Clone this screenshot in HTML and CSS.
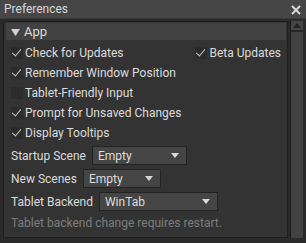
FILE: index.html
```html
<!DOCTYPE html>
<html>
<head>
<meta charset="utf-8">
<link rel="stylesheet" href="styles.css">
</head>
<body>
<div class="window">
  <div class="titlebar">
    <span class="title">Preferences</span>
    <svg class="close" width="10" height="10" viewBox="0 0 10 10"><path d="M1 1L9 9M9 1L1 9" stroke="#d8d8d8" stroke-width="2"/></svg>
  </div>
  <div class="body">
    <div class="panel">
      <div class="section">
        <div class="header"><svg class="tri" width="9" height="7" viewBox="0 0 9 7"><path d="M0 0H9L4.5 7Z" fill="#d0d0d0"/></svg><span>App</span></div>
        <div class="content">
          <div class="row split">
            <label class="check"><span class="box on"></span>Check for Updates</label>
            <label class="check"><span class="box on"></span>Beta Updates</label>
          </div>
          <div class="row"><label class="check"><span class="box on"></span>Remember Window Position</label></div>
          <div class="row"><label class="check"><span class="box"></span>Tablet-Friendly Input</label></div>
          <div class="row"><label class="check"><span class="box on"></span>Prompt for Unsaved Changes</label></div>
          <div class="row"><label class="check"><span class="box on"></span>Display Tooltips</label></div>
          <div class="crow first"><span class="lbl">Startup Scene</span><div class="combo w1"><span>Empty</span><i class="arrow"></i></div></div>
          <div class="crow"><span class="lbl">New Scenes</span><div class="combo w2"><span>Empty</span><i class="arrow"></i></div></div>
          <div class="crow"><span class="lbl">Tablet Backend</span><div class="combo w3"><span>WinTab</span><i class="arrow"></i></div></div>
          <div class="note">Tablet backend change requires restart.</div>
        </div>
      </div>
    </div>
    <div class="scrollbar">
      <div class="sbtn"><svg width="8" height="5" viewBox="0 0 8 5"><path d="M0 5H8L4 0Z" fill="#222"/></svg></div>
      <div class="thumb"></div>
    </div>
  </div>
</div>
</body>
</html>
```
FILE: styles.css
```css
html, body { margin: 0; padding: 0; }
body { background: #2a2a2a; font-family: "Roboto", sans-serif; font-size: 12px; color: #dcdcdc; }
.window { width: 306px; height: 243px; display: flex; flex-direction: column; background: #2a2a2a; }
.titlebar { height: 18px; background: #464646; display: flex; align-items: center; justify-content: space-between; padding: 0 5px 0 4px; border-bottom: 1px solid #3a3a3a; }
.title { font-size: 12px; color: #d8d8d8; }
.close { margin-top: 2px; }
.body { flex: 1; display: flex; padding: 2px 3px 5px 3px; gap: 2px; }
.panel { width: 285px; border: 1px solid #1f1f1f; background: #333; box-sizing: border-box; padding: 1px 1px 0 2px; }
.header { height: 17px; background: #424242; display: flex; align-items: center; gap: 4px; padding-left: 5px; font-size: 13px; color: #dcdcdc; }
.tri { margin-top: 1px; }
.content { padding: 3px 0 0 5px; }
.row { height: 20px; display: flex; align-items: center; }
.split { justify-content: space-between; padding-right: 5px; }
.check { display: flex; align-items: center; gap: 2px; }
.box { width: 12px; height: 12px; background: #2c2c2c; position: relative; }
.box.on::after { content: ""; position: absolute; left: 3px; top: 0px; width: 4px; height: 8px; border: solid #c8c8c8; border-width: 0 1.5px 1.5px 0; transform: rotate(40deg); }
.crow { height: 23px; display: flex; align-items: center; gap: 6px; }
.crow.first { margin-top: 1px; }
.combo { height: 19px; box-sizing: border-box; background: #454545; border: 1px solid #232323; display: flex; align-items: center; justify-content: space-between; padding: 0 7px 0 5px; }
.w1 { width: 95px; }
.w2 { width: 78px; }
.w3 { width: 119px; }
.arrow { width: 0; height: 0; border-left: 4px solid transparent; border-right: 4px solid transparent; border-top: 5px solid #d8d8d8; }
.note { color: #7c7c7c; height: 20px; display: flex; align-items: center; }
.scrollbar { width: 13px; background: #262626; border-left: 1px solid #1c1c1c; display: flex; flex-direction: column; box-sizing: border-box; }
.sbtn { height: 9px; background: #454545; display: flex; align-items: center; justify-content: center; border-bottom: 1px solid #222; }
.thumb { flex: 1; background: #424242; margin-top: 1px; }
```
